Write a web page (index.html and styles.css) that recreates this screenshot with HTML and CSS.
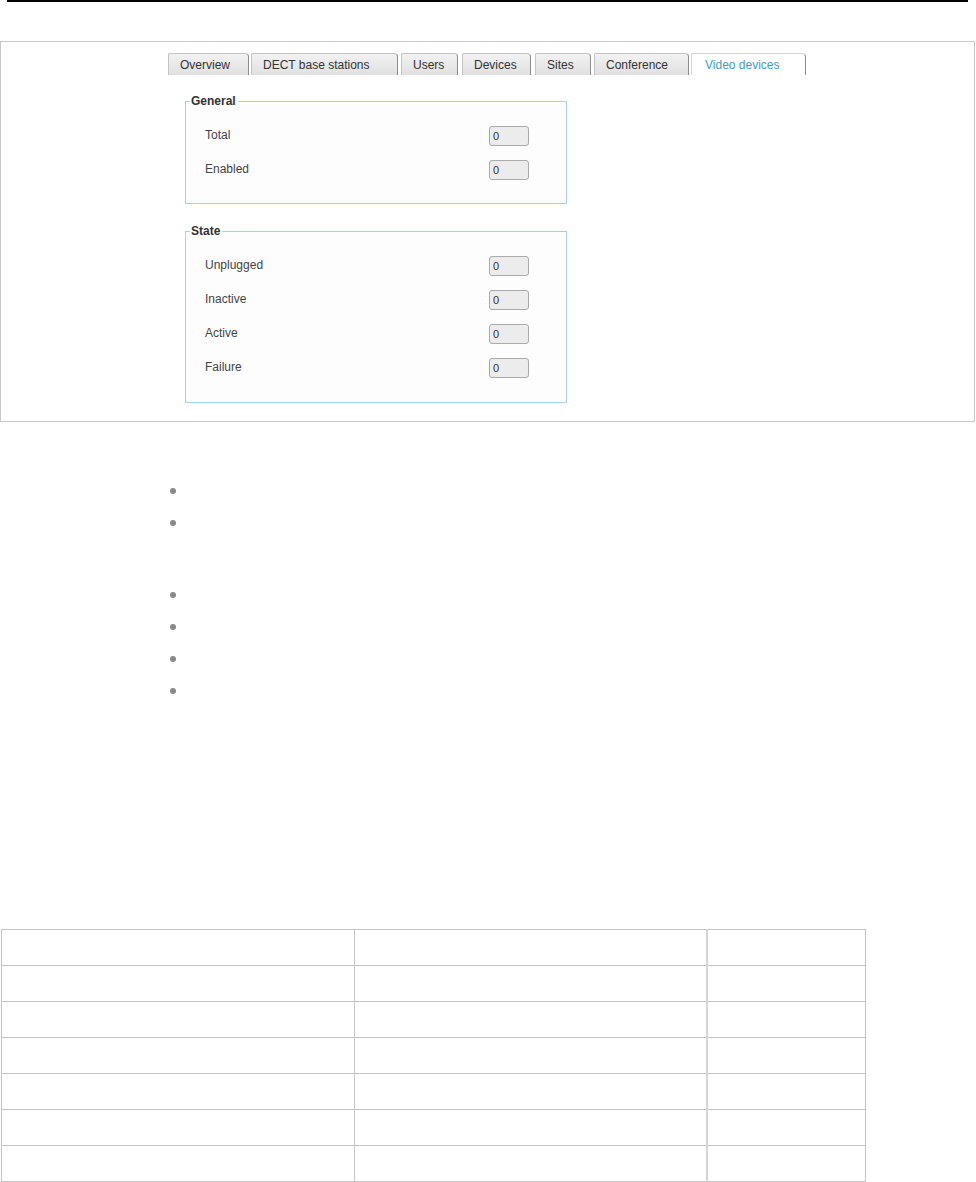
FILE: index.html
```html
<!DOCTYPE html>
<html lang="en">
<head>
  <meta charset="UTF-8">
  <meta name="viewport" content="width=device-width, initial-scale=1.0">
  <title>Video devices</title>
  <link rel="stylesheet" href="styles.css">
</head>
<body>
  <div class="topline"></div>

  <div class="shot">
    <div class="tabs">
      <div class="tab tab-overview">Overview</div>
      <div class="tab tab-dect">DECT base stations</div>
      <div class="tab tab-users">Users</div>
      <div class="tab tab-devices">Devices</div>
      <div class="tab tab-sites">Sites</div>
      <div class="tab tab-conf">Conference</div>
      <div class="tab tab-video active">Video devices</div>
    </div>

    <fieldset class="group">
      <legend>General</legend>
      <div class="row"><span class="label">Total</span><input class="count" type="text" value="0" readonly></div>
      <div class="row"><span class="label">Enabled</span><input class="count" type="text" value="0" readonly></div>
    </fieldset>

    <fieldset class="group group-state">
      <legend>State</legend>
      <div class="row"><span class="label">Unplugged</span><input class="count" type="text" value="0" readonly></div>
      <div class="row"><span class="label">Inactive</span><input class="count" type="text" value="0" readonly></div>
      <div class="row"><span class="label">Active</span><input class="count" type="text" value="0" readonly></div>
      <div class="row"><span class="label">Failure</span><input class="count" type="text" value="0" readonly></div>
    </fieldset>
  </div>

  <ul class="dots">
    <li></li>
    <li></li>
  </ul>
  <ul class="dots dots-second">
    <li></li>
    <li></li>
    <li></li>
    <li></li>
  </ul>

  <table class="grid">
    <tr><td></td><td></td><td></td></tr>
    <tr><td></td><td></td><td></td></tr>
    <tr><td></td><td></td><td></td></tr>
    <tr><td></td><td></td><td></td></tr>
    <tr><td></td><td></td><td></td></tr>
    <tr><td></td><td></td><td></td></tr>
    <tr><td></td><td></td><td></td></tr>
  </table>
</body>
</html>
```

FILE: styles.css
```css
body {
  margin: 0;
  font-family: "Liberation Sans", Arial, sans-serif;
  font-size: 12px;
  color: #333;
  background: #fff;
}
.topline {
  height: 2px;
  margin: 0 8px 0 7px;
  background: #000;
}
.shot {
  box-sizing: border-box;
  width: 975px;
  height: 381px;
  margin-top: 39px;
  padding-top: 11px;
  border: 1px solid #c8c8c8;
}
.tabs {
  display: flex;
  padding-left: 167px;
  height: 22px;
}
.tab {
  box-sizing: border-box;
  height: 22px;
  margin-right: 3px;
  padding: 4px 0 0 11px;
  background: linear-gradient(#f2f2f2, #e0e0e0);
  border: 1px solid #c4c4c4;
  border-right-color: #8c8c8c;
  border-bottom: none;
  border-radius: 2px 4px 0 0;
  color: #333;
  white-space: nowrap;
}
.tab-overview { width: 81px; margin-right: 2px; }
.tab-dect { width: 147px; }
.tab-users { width: 57px; margin-right: 4px; }
.tab-devices { width: 69px; margin-right: 4px; }
.tab-sites { width: 56px; }
.tab-conf { width: 95px; margin-right: 2px; }
.tab-video { width: 115px; padding-left: 13px; }
.tab.active {
  background: #fff;
  color: #3a9cc8;
  border-color: #d4d4d4;
  border-right-color: #8c8c8c;
}
.group {
  box-sizing: border-box;
  width: 382px;
  margin: 19px 0 0 184px;
  padding: 11px 0 16px 19px;
  border: 1px solid #a9d0e2;
  background: #fdfdfd;
}
.group-state {
  margin-top: 20px;
  padding-bottom: 17px;
}
.group legend {
  padding: 0 2px 0 1px;
  margin-left: -15px;
  font-weight: bold;
  color: #333;
  line-height: 14px;
}
.row {
  display: grid;
  grid-template-columns: 284px 40px;
  align-items: center;
  height: 34px;
}
.label {
  color: #444;
  margin-top: -3px;
}
.count {
  box-sizing: border-box;
  width: 40px;
  height: 20px;
  padding: 0 3px;
  border: 1px solid #aaa;
  border-radius: 3px;
  background: #ececec;
  font-family: "Liberation Sans", Arial, sans-serif;
  font-size: 11px;
  color: #333;
}
.dots {
  list-style: none;
  margin: 66px 0 0 170px;
  padding: 0;
}
.dots li {
  height: 32px;
}
.dots li::before {
  content: "";
  display: block;
  width: 6px;
  height: 6px;
  border-radius: 50%;
  background: #888;
}
.dots-second {
  margin-top: 40px;
}
.grid {
  border-collapse: collapse;
  margin: 209px 0 0 1px;
  width: 865px;
}
.grid td {
  height: 35px;
  padding: 0;
  border: 1px solid #c4c4c4;
}
.grid td:nth-child(1) { width: 352px; }
.grid td:nth-child(2) { width: 351px; }
.grid td:nth-child(3) { border-left: 2px solid #d4d4d4; }
```
